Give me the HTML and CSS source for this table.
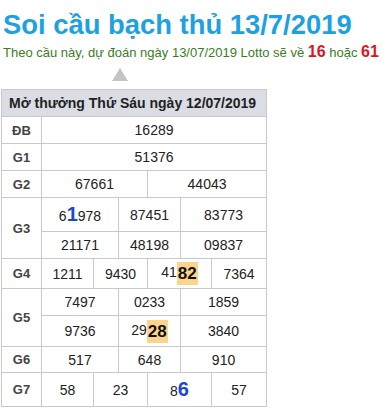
FILE: index.html
```html
<!DOCTYPE html>
<html>
<head>
<meta charset="utf-8">
<link rel="stylesheet" href="styles.css">
</head>
<body>
<h1 class="title">Soi cầu bạch thủ 13/7/2019</h1>
<p class="sub">Theo cầu này, dự đoán ngày 13/07/2019 Lotto sẽ về <b class="red">16</b> hoặc <b class="red">61</b></p>
<div class="arrow-row"><span class="arrow"></span></div>
<table class="kq">
  <colgroup>
    <col class="c0"><col class="c1"><col class="c2"><col class="c3"><col class="c4"><col class="c5"><col class="c6">
  </colgroup>
  <thead>
    <tr class="r-head"><th colspan="7">Mở thưởng Thứ Sáu ngày 12/07/2019</th></tr>
  </thead>
  <tbody>
    <tr class="r27"><td class="lbl">ĐB</td><td colspan="6">16289</td></tr>
    <tr class="r27"><td class="lbl">G1</td><td colspan="6">51376</td></tr>
    <tr class="r27"><td class="lbl">G2</td><td colspan="3">67661</td><td colspan="3">44043</td></tr>
    <tr class="r34"><td class="lbl" rowspan="2">G3</td><td colspan="2">6<b class="hit">1</b>978</td><td colspan="2">87451</td><td colspan="2">83773</td></tr>
    <tr class="r27"><td colspan="2">21171</td><td colspan="2">48198</td><td colspan="2">09837</td></tr>
    <tr class="r30"><td class="lbl">G4</td><td>1211</td><td colspan="2">9430</td><td colspan="2">41<b class="mark">82</b></td><td>7364</td></tr>
    <tr class="r27"><td class="lbl" rowspan="2">G5</td><td colspan="2">7497</td><td colspan="2">0233</td><td colspan="2">1859</td></tr>
    <tr class="r31"><td colspan="2">9736</td><td colspan="2">29<b class="mark">28</b></td><td colspan="2">3840</td></tr>
    <tr class="r26"><td class="lbl">G6</td><td colspan="2">517</td><td colspan="2">648</td><td colspan="2">910</td></tr>
    <tr class="r34"><td class="lbl">G7</td><td>58</td><td colspan="2">23</td><td colspan="2">8<b class="hit">6</b></td><td>57</td></tr>
  </tbody>
</table>
</body>
</html>
```
FILE: styles.css
```css
html, body {
  margin: 0;
  padding: 0;
  background: #fff;
  font-family: Arial, "Liberation Sans", sans-serif;
}
body {
  padding: 0 0 0 1px;
}
.title {
  margin: 0;
  padding: 9px 0 0 2px;
  font-size: 27.4px;
  line-height: 32px;
  font-weight: bold;
  color: #1da1e2;
}
.sub {
  margin: 0;
  padding: 2px 0 0 2px;
  font-size: 13px;
  line-height: 18px;
  color: #3a7d1f;
  white-space: nowrap;
}
.red {
  color: #e0141b;
  font-size: 16px;
}
.arrow-row {
  height: 27px;
  padding-left: 111px;
  padding-top: 6px;
  box-sizing: border-box;
}
.arrow {
  display: block;
  width: 0;
  height: 0;
  border-left: 8px solid transparent;
  border-right: 8px solid transparent;
  border-bottom: 13px solid #c4c4c4;
}
.kq {
  border-collapse: collapse;
  table-layout: fixed;
  width: 266px;
  font-size: 14px;
  color: #222;
  box-shadow: 0 2px 0 #c6c6c6;
}
.c0 { width: 40px; }
.c1 { width: 52px; }
.c2 { width: 25px; }
.c3 { width: 29px; }
.c4 { width: 33px; }
.c5 { width: 31px; }
.c6 { width: 55px; }
.kq th, .kq td {
  border: 1px solid #c9c9c9;
  text-align: center;
  padding: 0;
  white-space: nowrap;
}
.kq th {
  background: #dadde4;
  color: #222;
  font-weight: bold;
  font-size: 14px;
  height: 26px;
  text-align: left;
  padding-left: 7px;
}
.kq td.lbl {
  font-weight: bold;
  color: #444;
  font-size: 13px;
}
.r27 td { height: 26px; }
.r26 td { height: 25px; }
.r30 td { height: 29px; }
.r31 td { height: 30px; }
.r34 td { height: 33px; }
.hit {
  color: #1b45d4;
  font-size: 20px;
}
.mark {
  display: inline-block;
  background: #fcd48c;
  color: #111;
  font-size: 17px;
  line-height: 23px;
  padding: 0 1px;
  vertical-align: middle;
}
```
